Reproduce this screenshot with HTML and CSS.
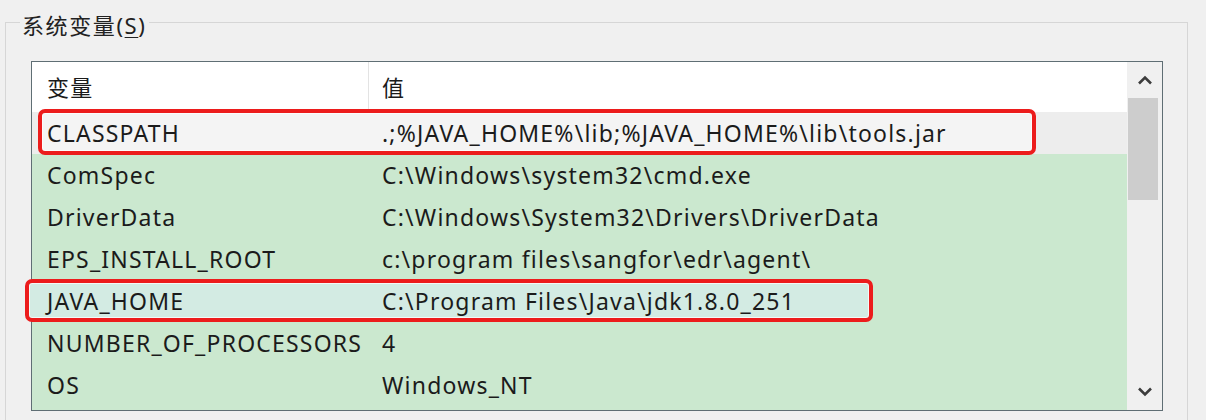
FILE: index.html
```html
<html lang="zh-CN">
<head>
  <meta charset="UTF-8">
  <title>系统变量</title>
  <link rel="stylesheet" href="styles.css">
</head>
<body>
  <fieldset class="group">
    <legend class="group-title">系统变量(<u>S</u>)</legend>
    <div class="list">
      <div class="table">
        <div class="row head">
          <div class="cell name">变量</div>
          <div class="cell value">值</div>
        </div>
        <div class="row current">
          <span class="mark mark-classpath"></span>
          <div class="cell name">CLASSPATH</div>
          <div class="cell value">.;%JAVA_HOME%\lib;%JAVA_HOME%\lib\tools.jar</div>
        </div>
        <div class="row">
          <div class="cell name">ComSpec</div>
          <div class="cell value">C:\Windows\system32\cmd.exe</div>
        </div>
        <div class="row">
          <div class="cell name">DriverData</div>
          <div class="cell value">C:\Windows\System32\Drivers\DriverData</div>
        </div>
        <div class="row">
          <div class="cell name">EPS_INSTALL_ROOT</div>
          <div class="cell value">c:\program files\sangfor\edr\agent\</div>
        </div>
        <div class="row">
          <span class="mark mark-java"></span>
          <div class="cell name">JAVA_HOME</div>
          <div class="cell value">C:\Program Files\Java\jdk1.8.0_251</div>
        </div>
        <div class="row">
          <div class="cell name">NUMBER_OF_PROCESSORS</div>
          <div class="cell value">4</div>
        </div>
        <div class="row">
          <div class="cell name">OS</div>
          <div class="cell value">Windows_NT</div>
        </div>
      </div>
      <div class="scrollbar">
        <div class="arrow">
          <svg width="16" height="10" viewBox="0 0 16 10"><path d="M2 8.5 L8 2.5 L14 8.5" fill="none" stroke="#3c3c3c" stroke-width="2.6"/></svg>
        </div>
        <div class="thumb"></div>
        <div class="track"></div>
        <div class="arrow">
          <svg width="16" height="10" viewBox="0 0 16 10"><path d="M2 1.5 L8 7.5 L14 1.5" fill="none" stroke="#3c3c3c" stroke-width="2.6"/></svg>
        </div>
      </div>
    </div>
  </fieldset>
</body>
</html>
```

FILE: styles.css
```css
body {
  margin: 0;
  background: #f0f0f0;
  font-family: "Noto Sans", "Noto Sans CJK SC", sans-serif;
  color: #1b1b1b;
  overflow: hidden;
}

.group {
  box-sizing: border-box;
  width: 1183px;
  height: 412px;
  margin: 9px 0 0 5px;
  padding: 0 0 0 14px;
  border: 1px solid #d6d6d6;
}

.group-title {
  position: relative;
  top: 3px;
  padding: 0 2px;
  font-size: 22px;
  line-height: 26px;
  letter-spacing: 1.6px;
  color: #222;
}

.group-title u {
  text-decoration-thickness: 1px;
  text-underline-offset: 3px;
}

.list {
  display: flex;
  width: 1130px;
  height: 348px;
  margin: 26px 0 0 11px;
  border: 1px solid #5f6e74;
  background: #ffffff;
}

.table {
  width: 1095px;
  background: #cbe8cf;
}

.row {
  display: grid;
  grid-template-columns: 337px 1fr;
  height: 42px;
  line-height: 42px;
  font-size: 23px;
  letter-spacing: 1.2px;
  position: relative;
  white-space: nowrap;
}

.cell { position: relative; }
.cell.name { padding-left: 15px; }
.cell.value { padding-left: 13px; }

.head {
  height: 50px;
  line-height: 50px;
  font-size: 22px;
  background: #ffffff;
}

.head .name {
  border-right: 1px solid #e3e3e3;
  margin: 0 0 7px;
  line-height: 50px;
}

.current {
  background: #ededed;
}

.mark {
  position: absolute;
  box-sizing: border-box;
  border: 4px solid #ec1c1c;
  border-radius: 7px;
  box-shadow: inset 0 0 0 1px rgba(255, 255, 255, 0.7);
}

.mark-classpath {
  left: 6px;
  top: -3px;
  width: 998px;
  height: 46px;
  background: #f4f4f4;
}

.mark-java {
  left: -7px;
  top: -1px;
  width: 848px;
  height: 43px;
  background: #d3ebe3;
}

.scrollbar {
  width: 35px;
  display: flex;
  flex-direction: column;
  background: #f0f0f0;
}

.arrow {
  height: 36px;
  display: flex;
  align-items: center;
  justify-content: center;
}

.thumb {
  height: 102px;
  margin: 0 4px 0 1px;
  background: #cdcdcd;
}

.track { flex: 1; }
```
